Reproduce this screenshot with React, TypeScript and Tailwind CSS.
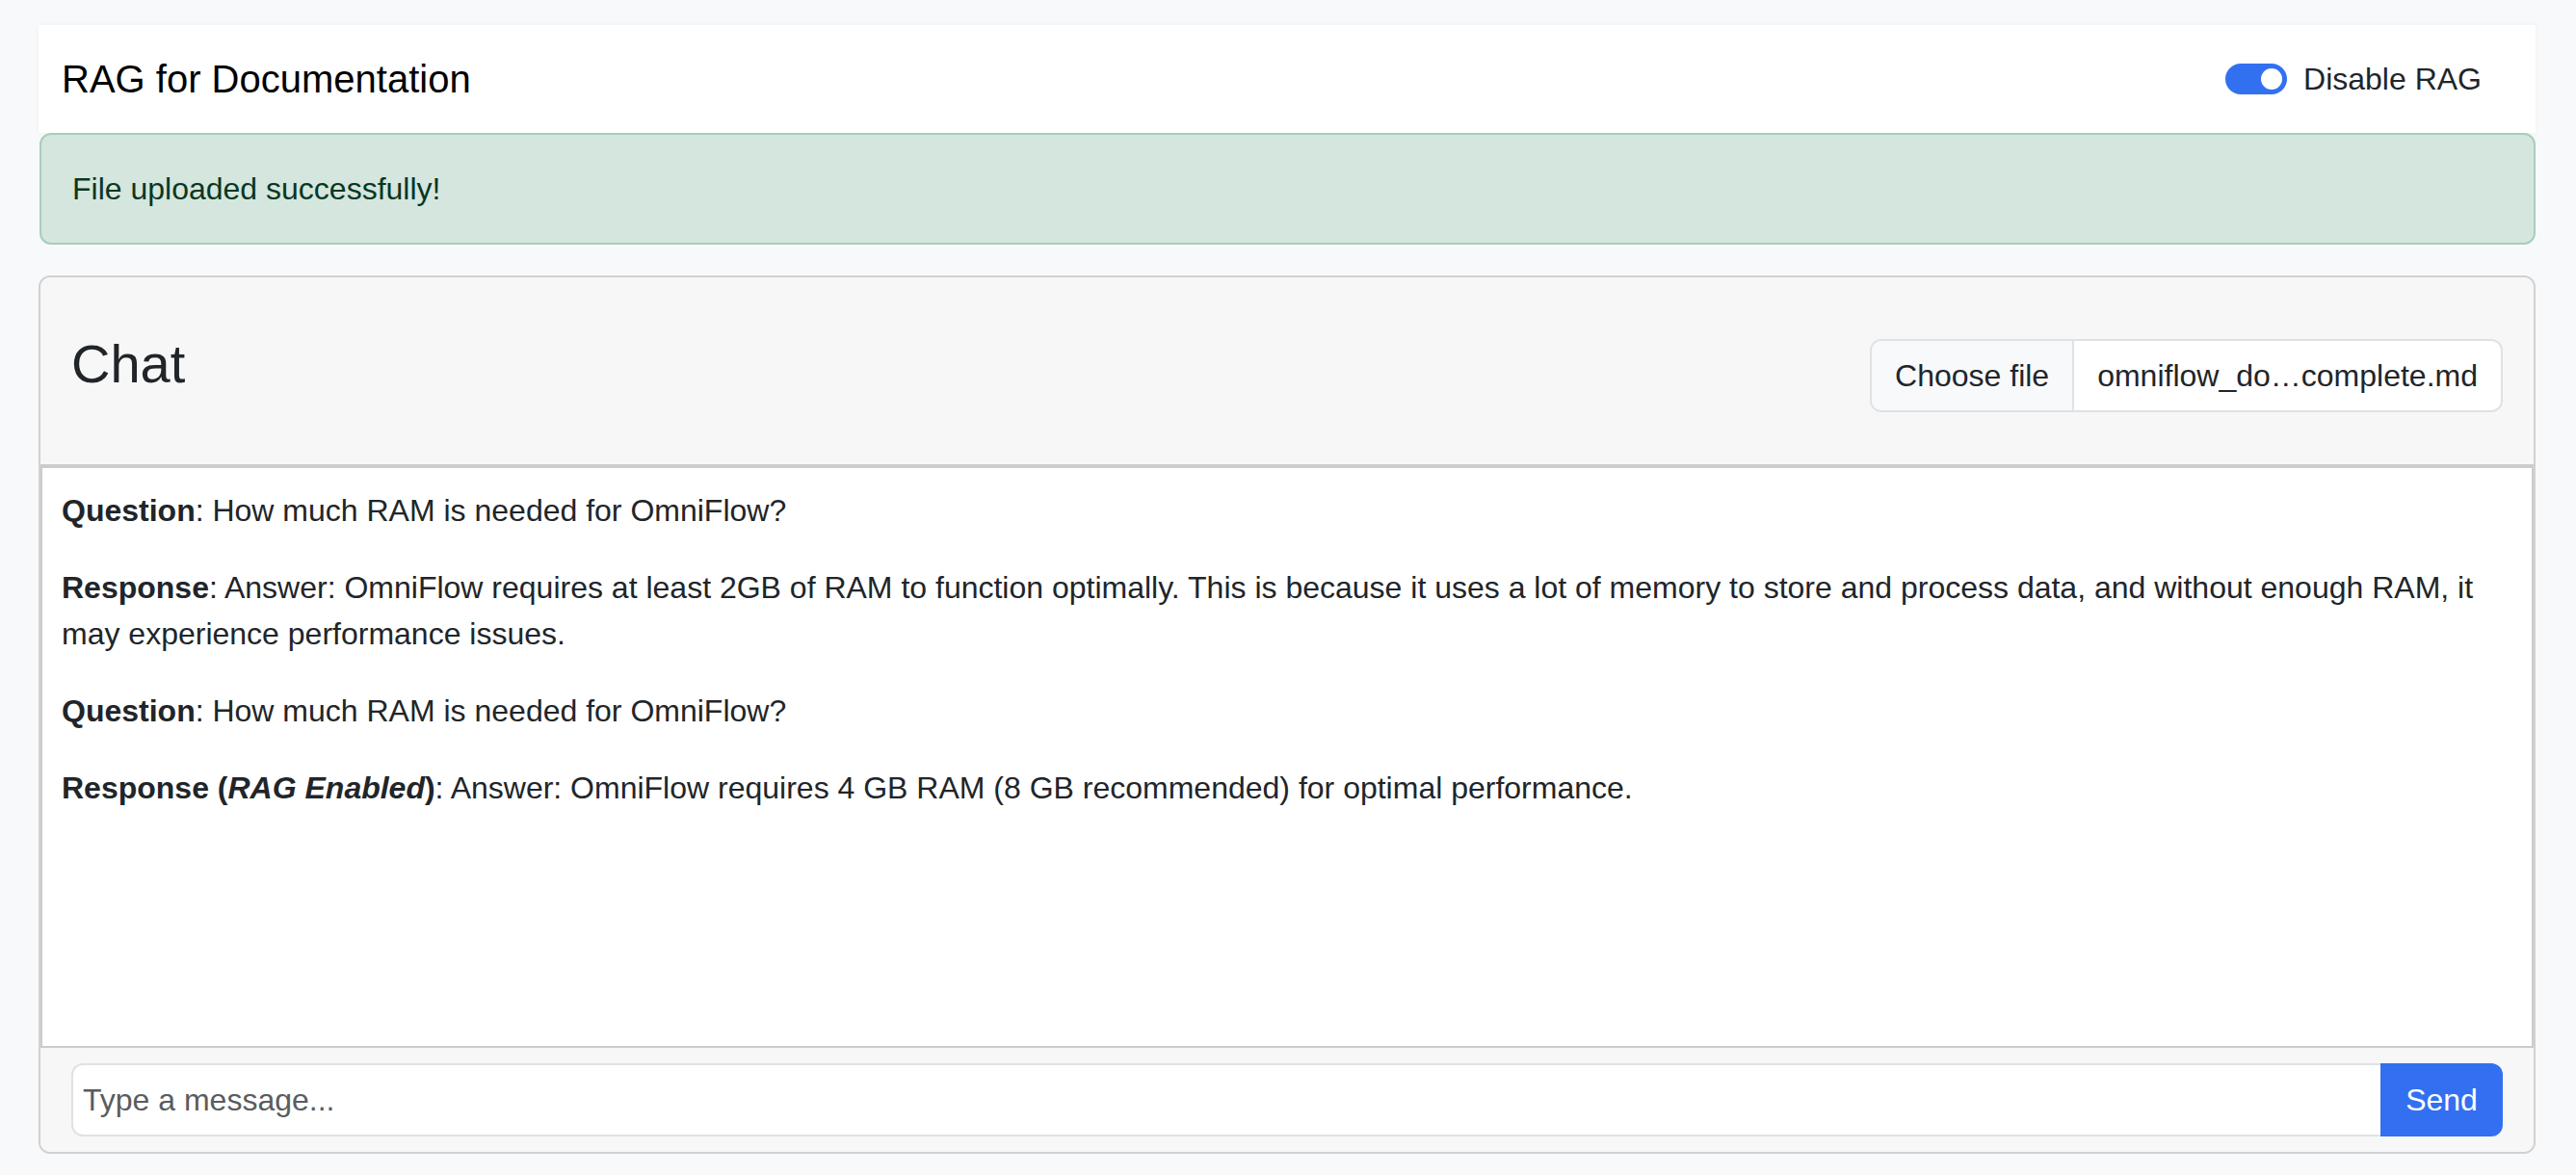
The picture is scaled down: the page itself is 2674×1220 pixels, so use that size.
import React from "react";

/**
 * Documentation RAG chat: navbar with the RAG switch, upload notice,
 * and a chat card (header with file picker, transcript, message bar).
 */
const MESSAGES: { label: React.ReactNode; text: string }[] = [
  { label: "Question", text: "How much RAM is needed for OmniFlow?" },
  {
    label: "Response",
    text: "Answer: OmniFlow requires at least 2GB of RAM to function optimally. This is because it uses a lot of memory to store and process data, and without enough RAM, it may experience performance issues.",
  },
  { label: "Question", text: "How much RAM is needed for OmniFlow?" },
  {
    label: (
      <>
        Response (<em>RAG Enabled</em>)
      </>
    ),
    text: "Answer: OmniFlow requires 4 GB RAM (8 GB recommended) for optimal performance.",
  },
];

export default function App() {
  return (
    <div className="min-h-screen bg-[#f8f9fa] pt-[26px] pl-[40px] pr-[42px] font-['Liberation_Sans',Arial,sans-serif] text-[#212529]">
      <nav className="flex h-[112px] items-center justify-between bg-white pl-[24px] pr-[56px] shadow-[0_0_6px_rgba(0,0,0,0.04)]">
        <span className="text-[40px] leading-[48px] text-black">
          RAG for Documentation
        </span>
        <label className="flex items-center gap-[17px] text-[32px] leading-[48px]">
          <span className="relative h-[32px] w-[64px] rounded-full bg-[#3370f1]">
            <span className="absolute right-[5px] top-[5px] h-[22px] w-[22px] rounded-full bg-white" />
          </span>
          Disable RAG
        </label>
      </nav>

      <div className="mb-[32px] ml-px rounded-[12px] border-2 border-[#a6cfbb] bg-[#d4e6dd] px-[32px] py-[32px] text-[32px] leading-[48px] text-[#0a3622]">
        File uploaded successfully!
      </div>

      <div className="overflow-hidden rounded-[12px] border-2 border-[#d1d1d1]">
        <div className="flex h-[196px] items-start justify-between border-b-2 border-[#cccccc] bg-[#f7f7f7] px-[32px]">
          <h3 className="mt-[56px] text-[56px] leading-[67px]">Chat</h3>
          <div className="mt-[64px] flex h-[76px] items-stretch overflow-hidden rounded-[12px] border-2 border-[#dee2e6] bg-white text-[32px] leading-[48px]">
            <span className="flex items-center border-r-2 border-[#dee2e6] bg-[#f8f9fa] px-[24px]">
              Choose file
            </span>
            <span className="flex items-center px-[24px]">
              omniflow_do…complete.md
            </span>
          </div>
        </div>

        <div className="h-[604px] overflow-y-auto border-2 border-[#cccccc] bg-white p-[20px] text-[32px] leading-[48px]">
          {MESSAGES.map((m, i) => (
            <p key={i} className="mb-[32px]">
              <strong>{m.label}</strong>: {m.text}
            </p>
          ))}
        </div>

        <div className="flex bg-[#f7f7f7] px-[32px] py-[16px]">
          <input
            className="h-[76px] flex-1 rounded-l-[12px] border-2 border-r-0 border-[#dee2e6] bg-white pl-[10px] text-[32px] outline-none placeholder:text-[#595c5f]"
            placeholder="Type a message..."
          />
          <button className="h-[76px] w-[127px] rounded-r-[12px] bg-[#3370f1] text-[32px] text-white">
            Send
          </button>
        </div>
      </div>
    </div>
  );
}
